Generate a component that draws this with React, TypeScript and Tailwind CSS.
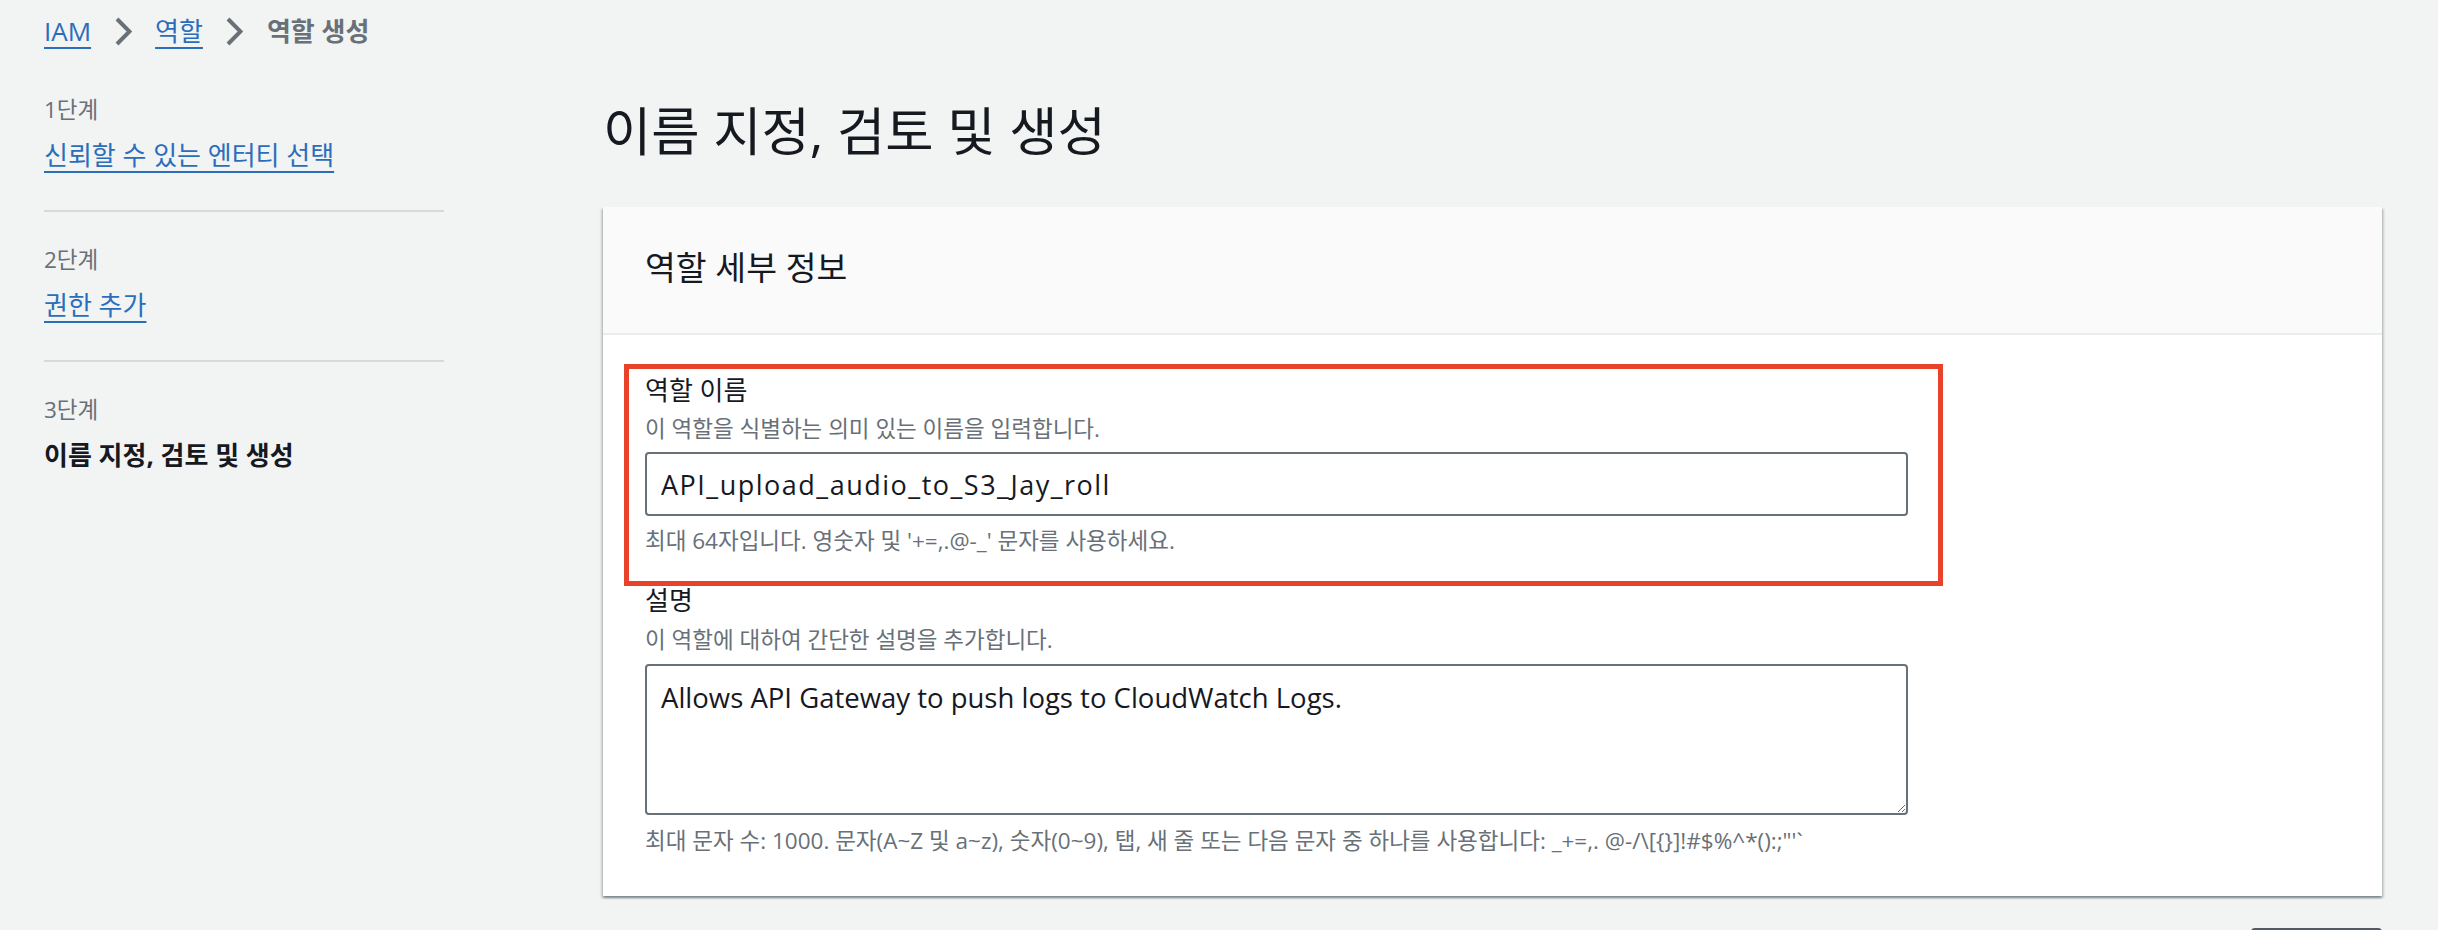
import React from "react";

const font = "font-['Open_Sans','Noto_Sans_CJK_KR',sans-serif]";

function Chevron() {
  return (
    <span className="flex w-[64px] shrink-0 justify-center">
      <svg width="17" height="29" viewBox="0 0 17 29" fill="none">
        <polyline points="2,2 14.5,14.5 2,27" stroke="#687078" strokeWidth="4" />
      </svg>
    </span>
  );
}

function Step({ n, label, link }: { n: string; label: string; link?: boolean }) {
  return (
    <div>
      <p className="text-[22.5px] leading-[30px] text-[#687078]">{n}</p>
      {link ? (
        <a className="mt-[9.5px] inline-block text-[26px] leading-[41px] text-[#2a6ebb] underline decoration-2 underline-offset-[6px]">
          {label}
        </a>
      ) : (
        <p className="mt-[9.5px] text-[26px] font-bold leading-[41px] text-[#16191f]">{label}</p>
      )}
    </div>
  );
}

export default function App() {
  return (
    <div className={`min-h-screen w-full bg-[#f2f3f3] px-[44px] pr-[56px] text-[#16191f] ${font}`}>
      {/* Breadcrumb */}
      <nav className="flex items-center pt-[10.5px] text-[26px] leading-[41px]">
        <a className="text-[#2a6ebb] underline decoration-2 underline-offset-[6px]">IAM</a>
        <Chevron />
        <a className="text-[#2a6ebb] underline decoration-2 underline-offset-[6px]">역할</a>
        <Chevron />
        <span className="font-bold text-[#687078]">역할 생성</span>
      </nav>

      <div className="mt-[43.5px] flex">
        {/* Wizard steps */}
        <aside className="w-[400px] shrink-0">
          <Step n="1단계" label="신뢰할 수 있는 엔터티 선택" link />
          <div className="mb-[33px] mt-[34.5px] h-[2px] bg-[#d5dbdb]" />
          <Step n="2단계" label="권한 추가" link />
          <div className="mb-[33px] mt-[34.5px] h-[2px] bg-[#d5dbdb]" />
          <Step n="3단계" label="이름 지정, 검토 및 생성" />
        </aside>

        <main className="ml-[159px] min-w-0 flex-1">
          <h1 className="mt-[1.5px] text-[52.5px] font-normal leading-[67px]">이름 지정, 검토 및 생성</h1>

          {/* Role details card */}
          <section className="mt-[43.5px] bg-white shadow-[0_2px_2px_0_rgba(0,28,36,0.3),2px_2px_2px_0_rgba(0,28,36,0.15),-2px_2px_2px_0_rgba(0,28,36,0.15)]">
            <div className="border-b-2 border-[#eaeded] bg-[#fafafa] px-[42px] pb-[45px] pt-[40px]">
              <h2 className="text-[33.5px] font-normal leading-[41px]">역할 세부 정보</h2>
            </div>

            <div className="px-[42px] pb-[40px] pt-[35px]">
              {/* Role name */}
              <div className="relative w-[1263px]">
                <label className="block text-[26px] leading-[41px]">역할 이름</label>
                <p className="mt-[3px] text-[22.5px] leading-[30px] text-[#687078]">
                  이 역할을 식별하는 의미 있는 이름을 입력합니다.
                </p>
                <input
                  readOnly
                  value="API_upload_audio_to_S3_Jay_roll"
                  className="mt-[8px] block h-[64px] w-full rounded-[4px] border-2 border-[#687078] bg-white px-[14px] text-[27px] tracking-[1.5px] text-[#16191f] outline-none"
                />
                <p className="mt-[10px] text-[22.5px] leading-[30px] text-[#687078]">
                  최대 64자입니다. 영숫자 및 '+=,.@-_' 문자를 사용하세요.
                </p>
                {/* annotation box */}
                <div className="pointer-events-none absolute -bottom-[30px] -left-[21px] -top-[6px] w-[1319px] border-[5px] border-[#e8432a]" />
              </div>

              {/* Description */}
              <div className="mt-[24px] w-[1263px]">
                <label className="block text-[26px] leading-[41px]">설명</label>
                <p className="mt-[4px] text-[22.5px] leading-[30px] text-[#687078]">
                  이 역할에 대하여 간단한 설명을 추가합니다.
                </p>
                <textarea
                  readOnly
                  defaultValue="Allows API Gateway to push logs to CloudWatch Logs."
                  className="mt-[9px] block h-[151px] w-full rounded-[4px] border-2 border-[#687078] bg-white px-[14px] py-[11px] text-[27.5px] leading-[41px] text-[#16191f] outline-none"
                />
                <p className="mt-[11px] whitespace-nowrap text-[22.5px] leading-[30px] text-[#687078]">
                  최대 문자 수: 1000. 문자(A~Z 및 a~z), 숫자(0~9), 탭, 새 줄 또는 다음 문자 중 하나를 사용합니다: _+=,. @-/\[{"{}"}]!#$%^*():;"'`
                </p>
              </div>
            </div>
          </section>

          {/* next section's action button, mostly below the fold */}
          <div className="mt-[32px] flex justify-end">
            <button aria-label="편집" className="h-[60px] w-[131px] rounded-[4px] border-2 border-[#545b64] bg-white" />
          </div>
        </main>
      </div>
    </div>
  );
}
